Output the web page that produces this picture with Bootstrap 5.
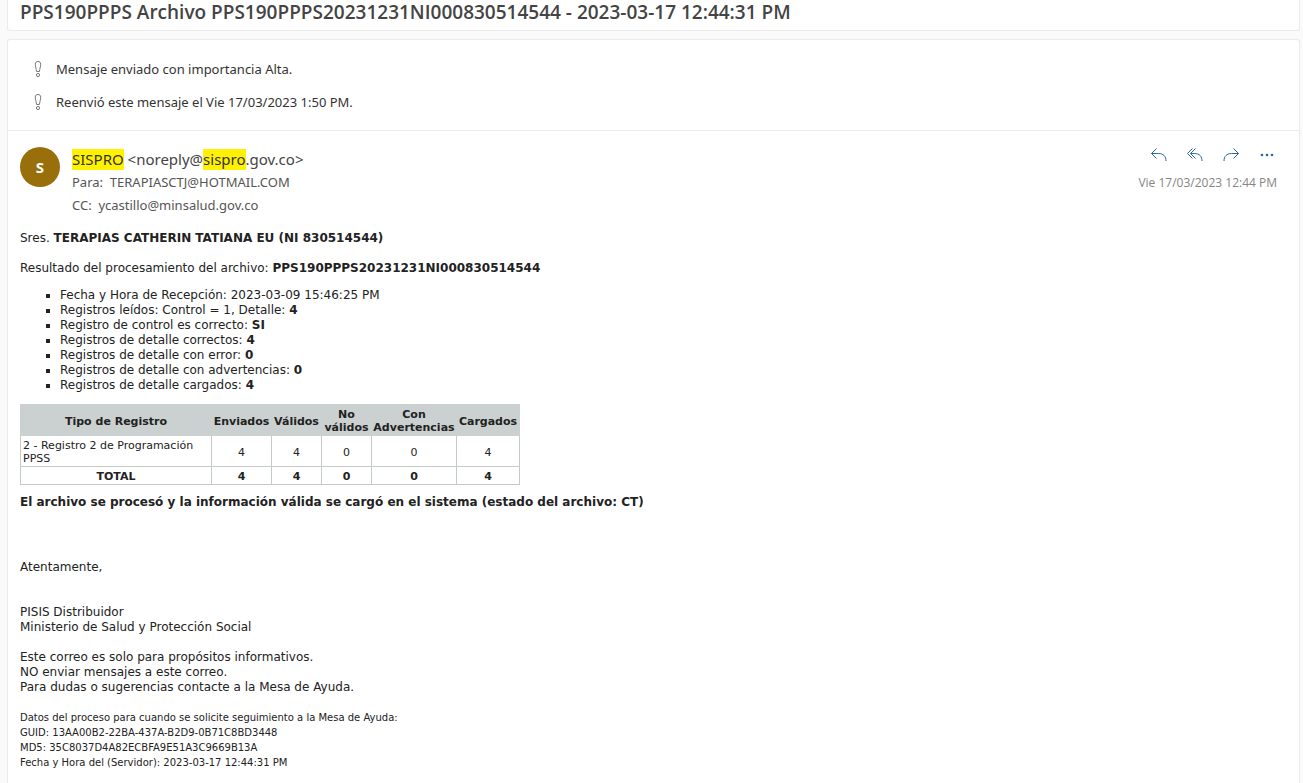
<!DOCTYPE html>
<html lang="es">
<head>
<meta charset="utf-8">
<meta name="viewport" content="width=device-width, initial-scale=1">
<title>PPS190PPPS Archivo</title>
<link href="https://cdn.jsdelivr.net/npm/bootstrap@5.3.0/dist/css/bootstrap.min.css" rel="stylesheet">
<style>
body { background: #fafafa; font-family: "Noto Sans", "Open Sans", sans-serif; color: #333; }
.shell { padding: 0 3px 0 7px; }
.panel { background: #fff; border: 1px solid #ebebeb; border-radius: 3px; }
.subject-bar { border-top: 0; border-radius: 0 0 3px 3px; padding: 0 12px 6px; margin-bottom: 8px; }
.subject-bar h1 { font-family: "Open Sans", sans-serif; font-size: 19px; line-height: 24px; font-weight: 600; color: #444; }
.mail { border-bottom: 0; border-radius: 3px 3px 0 0; }
.notices { padding: 13px 24px 11px; border-bottom: 1px solid #ebebeb; font-size: 13px; line-height: 33px; }
.notices svg { margin: 0 12px 4px 0; }
.mail-head { padding: 16px 22px 0 12px; }
.avatar { width: 40px; height: 40px; background: #986f0b; font-size: 15px; }
.sender { font-size: 15px; line-height: 24px; color: #444; }
.sender mark { background: #fff100; padding: 0; color: #333; display: inline-block; line-height: 21px; }
.addressee { font-size: 13px; line-height: 23px; color: #555; }
.tool { width: 20px; height: 16px; color: #2f64a8; }
.stamp { font-family: "Open Sans", sans-serif; font-size: 12px; line-height: 18px; color: #858585; margin-top: 11px; }
.letter { padding: 14px 12px 12px; font-family: "DejaVu Sans", sans-serif; font-size: 12px; line-height: 15px; color: #222; }
.letter p { margin-bottom: 15px; }
.letter ul { list-style: square; padding-left: 40px; margin: -3px 0 11px; }
.letter .fine { font-size: 10px; margin: 0; }
.letter .closing { padding-top: 5px; }
.summary { width: 500px; font-size: 11px; line-height: 13px; table-layout: fixed; margin-bottom: 10px; color: #222; text-align: center; }
.summary th, .summary td { border: 1px solid #c3cbc9; padding: 3px 2px 1px; vertical-align: middle; text-align: center; }
.summary thead th { background: #cbd0d0; border-color: #cbd0d0; padding: 3px 0 1px; }
.summary tbody td:first-child { text-align: left; }
</style>
</head>
<body>
<div class="shell d-flex flex-column min-vh-100">
  <header class="panel subject-bar">
    <h1 class="m-0">PPS190PPPS Archivo PPS190PPPS20231231NI000830514544 - 2023-03-17 12:44:31 PM</h1>
  </header>
  <main class="panel mail flex-grow-1">
    <div class="notices">
      <div><svg width="12" height="18" viewBox="0 0 12 18" fill="none" stroke="#777" aria-hidden="true"><path d="M6 1.500C4.400 1.500 3.300 2.400 3.300 4.200C3.300 6.500 4.200 8.500 4.600 11.500H7.400C7.800 8.500 8.700 6.500 8.700 4.200C8.700 2.400 7.600 1.500 6 1.500Z"/><circle cx="6" cy="15" r="1.600"/></svg>Mensaje enviado con importancia Alta.</div>
      <div><svg width="12" height="18" viewBox="0 0 12 18" fill="none" stroke="#777" aria-hidden="true"><path d="M6 1.500C4.400 1.500 3.300 2.400 3.300 4.200C3.300 6.500 4.200 8.500 4.600 11.500H7.400C7.800 8.500 8.700 6.500 8.700 4.200C8.700 2.400 7.600 1.500 6 1.500Z"/><circle cx="6" cy="15" r="1.600"/></svg>Reenvió este mensaje el Vie 17/03/2023 1:50 PM.</div>
    </div>
    <div class="mail-head d-flex">
      <div class="avatar rounded-circle text-white fw-bold d-flex align-items-center justify-content-center flex-shrink-0 me-2">S</div>
      <div class="ms-1 flex-grow-1">
        <div class="sender"><mark>SISPRO</mark> &lt;noreply@<mark>sispro</mark>.gov.co&gt;</div>
        <div class="addressee">Para:&nbsp; TERAPIASCTJ@HOTMAIL.COM</div>
        <div class="addressee">CC:&nbsp; ycastillo@minsalud.gov.co</div>
      </div>
      <div class="d-flex flex-column align-items-end">
        <div class="d-flex gap-3">
          <button type="button" class="tool btn p-0 border-0 d-flex" aria-label="Responder"><svg width="20" height="16" viewBox="0 0 20 16" fill="none" stroke="currentColor"><path d="M7.500 1.500 2.500 6.500l5 5M2.500 6.500h7c5 0 7.500 3 7.500 7.500"/></svg></button>
          <button type="button" class="tool btn p-0 border-0 d-flex" aria-label="Responder a todos"><svg width="20" height="16" viewBox="0 0 20 16" fill="none" stroke="currentColor"><path d="M7.500 1.500 2.500 6.500l5 5M10.500 1.500l-5 5 5 5M5.500 6.500h4c5 0 7.500 3 7.500 7.500"/></svg></button>
          <button type="button" class="tool btn p-0 border-0 d-flex" aria-label="Reenviar"><svg width="20" height="16" viewBox="0 0 20 16" fill="none" stroke="currentColor"><path d="M12.500 1.500l5 5-5 5M17.500 6.500h-7C5.500 6.500 3 9.500 3 14"/></svg></button>
          <button type="button" class="tool btn p-0 border-0 d-flex" aria-label="Más acciones"><svg width="20" height="16" viewBox="0 0 20 16" fill="currentColor"><circle cx="5" cy="8" r="1.300"/><circle cx="10" cy="8" r="1.300"/><circle cx="15" cy="8" r="1.300"/></svg></button>
        </div>
        <div class="stamp">Vie 17/03/2023 12:44 PM</div>
      </div>
    </div>
    <article class="letter">
      <p>Sres. <b>TERAPIAS CATHERIN TATIANA EU (NI 830514544)</b></p>
      <p>Resultado del procesamiento del archivo: <b>PPS190PPPS20231231NI000830514544</b></p>
      <ul>
        <li>Fecha y Hora de Recepción: 2023-03-09 15:46:25 PM</li>
        <li>Registros leídos: Control = 1, Detalle: <b>4</b></li>
        <li>Registro de control es correcto: <b>SI</b></li>
        <li>Registros de detalle correctos: <b>4</b></li>
        <li>Registros de detalle con error: <b>0</b></li>
        <li>Registros de detalle con advertencias: <b>0</b></li>
        <li>Registros de detalle cargados: <b>4</b></li>
      </ul>
      <table class="summary">
        <colgroup><col style="width:191px"><col style="width:60px"><col style="width:50px"><col style="width:50px"><col style="width:85px"><col></colgroup>
        <thead><tr><th scope="col">Tipo de Registro</th><th scope="col">Enviados</th><th scope="col">Válidos</th><th scope="col">No válidos</th><th scope="col">Con Advertencias</th><th scope="col">Cargados</th></tr></thead>
        <tbody><tr><td>2 - Registro 2 de Programación PPSS</td><td>4</td><td>4</td><td>0</td><td>0</td><td>4</td></tr></tbody>
        <tfoot><tr><th scope="row">TOTAL</th><th>4</th><th>4</th><th>0</th><th>0</th><th>4</th></tr></tfoot>
      </table>
      <p><b>El archivo se procesó y la información válida se cargó en el sistema (estado del archivo: CT)</b></p>
      <p class="closing"><br><br>Atentamente,</p>
      <p><br>PISIS Distribuidor<br>Ministerio de Salud y Protección Social</p>
      <p>Este correo es solo para propósitos informativos.<br>NO enviar mensajes a este correo.<br>Para dudas o sugerencias contacte a la Mesa de Ayuda.</p>
      <p class="fine">Datos del proceso para cuando se solicite seguimiento a la Mesa de Ayuda:<br>GUID: 13AA00B2-22BA-437A-B2D9-0B71C8BD3448<br>MD5: 35C8037D4A82ECBFA9E51A3C9669B13A<br>Fecha y Hora del (Servidor): 2023-03-17 12:44:31 PM</p>
    </article>
  </main>
</div>
<script src="https://cdn.jsdelivr.net/npm/bootstrap@5.3.0/dist/js/bootstrap.bundle.min.js"></script>
</body>
</html>
